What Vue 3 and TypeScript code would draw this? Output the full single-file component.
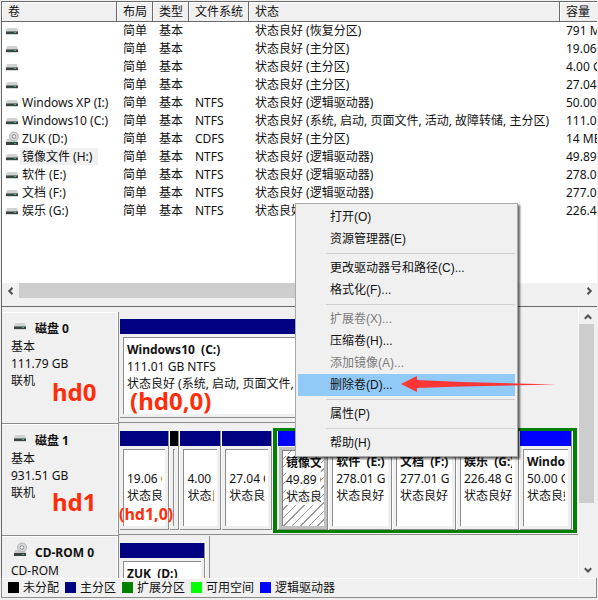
<script setup lang="ts">
interface Volume {
  name: string
  icon: 'drive' | 'disc'
  fs: string
  status: string
  size: string
  selected?: boolean
}

interface Partition {
  title: string
  size: string
  status: string
  kind: 'primary' | 'logical' | 'free'
  weight: number
  selected?: boolean
}

interface MenuEntry {
  label?: string
  disabled?: boolean
  active?: boolean
}

const columns = [
  { label: '卷', cls: 'c-name' },
  { label: '布局', cls: 'c-small' },
  { label: '类型', cls: 'c-small' },
  { label: '文件系统', cls: 'c-fs' },
  { label: '状态', cls: 'c-status' },
  { label: '容量', cls: 'c-size' },
]

const volumes: Volume[] = [
  { name: '', icon: 'drive', fs: '', status: '状态良好 (恢复分区)', size: '791 MB' },
  { name: '', icon: 'drive', fs: '', status: '状态良好 (主分区)', size: '19.06 GB' },
  { name: '', icon: 'drive', fs: '', status: '状态良好 (主分区)', size: '4.00 GB' },
  { name: '', icon: 'drive', fs: '', status: '状态良好 (主分区)', size: '27.04 GB' },
  { name: 'Windows XP (I:)', icon: 'drive', fs: 'NTFS', status: '状态良好 (逻辑驱动器)', size: '50.00 GB' },
  { name: 'Windows10 (C:)', icon: 'drive', fs: 'NTFS', status: '状态良好 (系统, 启动, 页面文件, 活动, 故障转储, 主分区)', size: '111.01 GB' },
  { name: 'ZUK (D:)', icon: 'disc', fs: 'CDFS', status: '状态良好 (主分区)', size: '14 MB' },
  { name: '镜像文件 (H:)', icon: 'drive', fs: 'NTFS', status: '状态良好 (逻辑驱动器)', size: '49.89 GB', selected: true },
  { name: '软件 (E:)', icon: 'drive', fs: 'NTFS', status: '状态良好 (逻辑驱动器)', size: '278.01 GB' },
  { name: '文档 (F:)', icon: 'drive', fs: 'NTFS', status: '状态良好 (逻辑驱动器)', size: '277.01 GB' },
  { name: '娱乐 (G:)', icon: 'drive', fs: 'NTFS', status: '状态良好 (逻辑驱动器)', size: '226.48 GB' },
]

const primaries: Partition[] = [
  { title: '', size: '19.06 GB', status: '状态良好', kind: 'primary', weight: 50 },
  { title: '', size: '', status: '', kind: 'free', weight: 10 },
  { title: '', size: '4.00 GB', status: '状态良好', kind: 'primary', weight: 42 },
  { title: '', size: '27.04 GB', status: '状态良好', kind: 'primary', weight: 51 },
]

const logicals: Partition[] = [
  { title: '镜像文件', size: '49.89 GB', status: '状态良好', kind: 'logical', weight: 51, selected: true },
  { title: '软件  (E:)', size: '278.01 GB', status: '状态良好', kind: 'logical', weight: 64 },
  { title: '文档  (F:)', size: '277.01 GB', status: '状态良好', kind: 'logical', weight: 64 },
  { title: '娱乐  (G:)', size: '226.48 GB', status: '状态良好', kind: 'logical', weight: 63 },
  { title: 'Windows XP', size: '50.00 GB', status: '状态良好', kind: 'logical', weight: 53 },
]

const disks = [
  {
    name: '磁盘 0', icon: 'drive', type: '基本', size: '111.79 GB', state: '联机', span: 'wide', extended: [] as Partition[],
    parts: [{ title: 'Windows10  (C:)', size: '111.01 GB NTFS', status: '状态良好 (系统, 启动, 页面文件, 活动, 故障转储, 主分区)', kind: 'primary', weight: 1 }] as Partition[],
  },
  { name: '磁盘 1', icon: 'drive', type: '基本', size: '931.51 GB', state: '联机', span: 'full', parts: primaries, extended: logicals },
  {
    name: 'CD-ROM 0', icon: 'disc', type: 'CD-ROM', size: '', state: '', span: 'short', extended: [] as Partition[],
    parts: [{ title: 'ZUK  (D:)', size: '', status: '', kind: 'primary', weight: 1 }] as Partition[],
  },
]

const menu: MenuEntry[] = [
  { label: '打开(O)' },
  { label: '资源管理器(E)' },
  {},
  { label: '更改驱动器号和路径(C)...' },
  { label: '格式化(F)...' },
  {},
  { label: '扩展卷(X)...', disabled: true },
  { label: '压缩卷(H)...' },
  { label: '添加镜像(A)...', disabled: true },
  { label: '删除卷(D)...', active: true },
  {},
  { label: '属性(P)' },
  {},
  { label: '帮助(H)' },
]

const legend = [
  { label: '未分配', cls: 'k-free' },
  { label: '主分区', cls: 'k-primary' },
  { label: '扩展分区', cls: 'k-extended' },
  { label: '可用空间', cls: 'k-space' },
  { label: '逻辑驱动器', cls: 'k-logical' },
]

const weightOf = (parts: Partition[]) => parts.reduce((sum, p) => sum + p.weight, 0)
</script>

<template>
  <svg class="defs" aria-hidden="true">
    <symbol id="drive" viewBox="0 0 14 16">
      <path d="M2 5h10l1 3H1z" fill="#d0d2d1" />
      <path d="M1 8h12v3H1z" fill="#3c4441" />
      <path d="M1 8h12v1H1z" fill="#7d8481" />
      <path d="M9 9h2v1H9z" fill="#38b060" />
      <path d="M1 11h12v1H1z" fill="#d3d6d4" />
    </symbol>
    <symbol id="disc" viewBox="0 0 14 16">
      <path d="M2 8h9l2 3H1z" fill="#c9cbca" />
      <path d="M1 11h12v3H1z" fill="#3c4441" />
      <path d="M9 12h2v1H9z" fill="#38b060" />
      <circle cx="9" cy="5.500" r="4.500" fill="#d7d9da" stroke="#a2a5a7" stroke-width=".8" />
      <circle cx="9" cy="5.500" r="1.800" fill="#fff" stroke="#85888a" />
    </symbol>
  </svg>

  <main class="window">
    <section class="list">
      <div class="table-wrap">
        <table>
          <thead>
            <tr>
              <th v-for="c in columns" :key="c.label" :class="c.cls">{{ c.label }}</th>
            </tr>
          </thead>
          <tbody>
            <tr v-for="(v, i) in volumes" :key="i">
              <td class="name">
                <div class="name-cell">
                  <svg class="icon"><use :href="'#' + v.icon" /></svg>
                  <span v-if="v.name" :class="{ picked: v.selected }">{{ v.name }}</span>
                </div>
              </td>
              <td>简单</td>
              <td>基本</td>
              <td>{{ v.fs }}</td>
              <td>{{ v.status }}</td>
              <td>{{ v.size }}</td>
            </tr>
          </tbody>
        </table>
      </div>
      <div class="hscroll">
        <button type="button" aria-label="向左滚动">
          <svg width="8" height="8" viewBox="0 0 8 8"><path d="M5.500 .8 2.300 4l3.200 3.200" /></svg>
        </button>
        <div class="hthumb"></div>
        <button type="button" aria-label="向右滚动">
          <svg width="8" height="8" viewBox="0 0 8 8"><path d="M2.500 .8 5.700 4 2.500 7.200" /></svg>
        </button>
      </div>
    </section>

    <section class="graph">
      <div class="disks">
        <article v-for="d in disks" :key="d.name" class="disk">
          <div class="label">
            <h2><svg class="icon"><use :href="'#' + d.icon" /></svg>{{ d.name }}</h2>
            <p>{{ d.type }}</p>
            <p>{{ d.size }}</p>
            <p>{{ d.state }}</p>
          </div>
          <div class="track" :class="d.span">
            <div class="parts" :style="{ flexGrow: weightOf(d.parts) }">
              <div v-for="(p, i) in d.parts" :key="i" class="part" :style="{ flexGrow: p.weight }">
                <div class="bar" :class="'k-' + p.kind"></div>
                <div class="body">
                  <div class="text"><b>{{ p.title }}</b><span>{{ p.size }}</span><span>{{ p.status }}</span></div>
                </div>
              </div>
            </div>
            <div v-if="d.extended.length" class="parts extended" :style="{ flexGrow: weightOf(d.extended) }">
              <div v-for="(p, i) in d.extended" :key="i" class="part" :class="{ hatched: p.selected }" :style="{ flexGrow: p.weight }">
                <div class="bar" :class="'k-' + p.kind"></div>
                <div class="body">
                  <div class="text"><b>{{ p.title }}</b><span>{{ p.size }}</span><span>{{ p.status }}</span></div>
                </div>
              </div>
            </div>
          </div>
        </article>
      </div>
      <div class="vscroll">
        <button type="button" aria-label="向上滚动">
          <svg width="8" height="8" viewBox="0 0 8 8"><path d="M.8 5.700 4 2.500l3.200 3.200" /></svg>
        </button>
        <div class="vtrack"><div class="vthumb"></div></div>
        <button type="button" aria-label="向下滚动">
          <svg width="8" height="8" viewBox="0 0 8 8"><path d="M.8 2.300 4 5.500l3.200-3.200" /></svg>
        </button>
      </div>
    </section>

    <footer class="legend">
      <span v-for="l in legend" :key="l.label" class="key"><i :class="l.cls"></i>{{ l.label }}</span>
    </footer>

    <strong class="note n1">hd0</strong>
    <strong class="note n2">(hd0,0)</strong>
    <strong class="note n3">hd1</strong>
    <strong class="note n4">(hd1,0)</strong>

    <div class="menu" role="menu">
      <template v-for="(m, i) in menu" :key="i">
        <button v-if="m.label" type="button" role="menuitem" :disabled="m.disabled" :class="{ active: m.active }">{{ m.label }}</button>
        <hr v-else />
      </template>
    </div>
    <svg class="arrow" width="156" height="18" viewBox="0 0 156 18" aria-hidden="true">
      <path d="M0 9 16 1v4L60 7l95 2.500L60 11.500l-44 1.500V17z" fill="#fb3634" />
    </svg>
  </main>
</template>

<style>
body {
  margin: 0;
  background: #f0f0f0;
}
</style>

<style scoped>
.window {
  position: relative;
  display: flex;
  flex-direction: column;
  box-sizing: border-box;
  height: 100vh;
  padding: 1px 1px 2px;
  overflow: hidden;
  background: #f0f0f0;
  color: #111;
  font: 12px/17px "Noto Sans", "Noto Sans CJK SC", sans-serif;
}
.defs {
  position: absolute;
  width: 0;
  height: 0;
}
.icon {
  flex: none;
  width: 14px;
  height: 16px;
}
.list {
  flex: 1;
  min-height: 0;
  display: flex;
  flex-direction: column;
  border: solid #696969;
  border-width: 1px 0 1px 1px;
  padding-bottom: 8px;
}
.table-wrap {
  flex: 1;
  min-height: 0;
  overflow: hidden;
  background: #fff;
}
table {
  width: 100%;
  table-layout: fixed;
  border-collapse: separate;
  border-spacing: 0;
}
th,
td {
  box-sizing: border-box;
  height: 18px;
  padding: 0 0 1px 6px;
  overflow: hidden;
  white-space: nowrap;
  text-align: left;
  font-weight: 400;
}
th {
  height: 20px;
  background: #f0f0f0;
  border-right: 1px solid #696969;
  border-bottom: 1px solid #696969;
  box-shadow: inset 1px 1px #fff;
}
th:last-child {
  border-right: 0;
}
.c-name {
  width: 115px;
}
.c-small {
  width: 36px;
}
.c-fs {
  width: 60px;
}
.c-status {
  width: 311px;
}
td.name {
  padding-left: 3px;
}
.name-cell {
  display: flex;
  align-items: center;
  gap: 1px;
}
.name-cell span {
  padding: 0 6px 0 2px;
}
.picked {
  background: #f0f0f0;
}
button {
  padding: 0;
  border: 0;
  background: transparent;
  color: inherit;
  font: inherit;
}
.hscroll,
.vscroll {
  flex: none;
  display: flex;
}
.hscroll {
  height: 15px;
}
.hscroll button,
.vscroll button {
  display: flex;
  align-items: center;
  justify-content: center;
  width: 17px;
  height: 15px;
}
.hscroll path,
.vscroll path {
  fill: none;
  stroke: #505050;
  stroke-width: 2;
}
.hthumb {
  flex: 0 1 480px;
  margin-right: auto;
  background: #cdcdcd;
}
.graph {
  flex: 0 0 271px;
  display: flex;
  min-height: 0;
  border-left: 1px solid #696969;
  padding-right: 1px;
}
.disks {
  flex: 1;
  min-width: 0;
  padding-top: 5px;
  overflow: hidden;
}
.disk {
  display: flex;
  height: 112px;
}
.label {
  flex: none;
  box-sizing: border-box;
  width: 117px;
  padding: 8px 0 0 9px;
  border: solid #8c8c8c;
  border-width: 0 1px 1px 0;
  box-shadow: inset -1px 1px #fff;
}
.label h2 {
  display: flex;
  gap: 8px;
  margin: 0;
  padding-left: 2px;
  font-size: 12px;
  line-height: 18px;
}
.label h2 .icon {
  margin-top: -2px;
}
.label p {
  height: 17px;
  margin: 0;
}
.track {
  box-sizing: border-box;
  display: flex;
  height: 111px;
  padding: 7px 1px 4px;
  border-bottom: 1px solid #8c8c8c;
}
.full {
  flex: 1;
  min-width: 0;
}
.wide {
  flex: 0 1 370px;
  min-width: 0;
}
.short {
  flex: 0 0 91px;
  padding-right: 3px;
  border-right: 1px solid #8c8c8c;
}
.parts {
  flex-basis: 0;
  min-width: 0;
  display: flex;
}
.extended {
  box-sizing: border-box;
  margin: -3px 0;
  border: solid #008000;
  border-width: 3px 4px;
  padding-left: 1px;
}
.part {
  box-sizing: border-box;
  flex-basis: 0;
  min-width: 0;
  display: flex;
  flex-direction: column;
  border-right: 1px solid #fff;
  box-shadow: inset -1px -1px #8c8c8c;
}
.bar {
  flex: none;
  height: 15px;
  margin-right: 1px;
}
.body {
  flex: 1;
  min-height: 0;
  display: flex;
  padding: 3px 4px 4px 3px;
}
.text {
  flex: 1;
  min-width: 0;
  padding: 3px 3px 0;
  border: solid #8c8c8c;
  border-width: 1px 0 0 1px;
  background: #fff;
}
.text b,
.text span {
  display: block;
  height: 17px;
  overflow: hidden;
  white-space: pre;
}
.k-free + .body .text {
  padding: 0;
  background: #f0f0f0;
}
.hatched .body {
  margin: 1px;
  padding: 3px;
  background: #c0c0c0;
}
.hatched .text {
  border-color: #808080;
  background: repeating-linear-gradient(135deg, #fff 0 5px, #9a9a9a 5px 6px);
}
.hatched .text b,
.hatched .text span {
  background: #fffc;
}
.k-free {
  background: #000;
}
.k-primary {
  background: #000080;
}
.k-extended {
  background: #008000;
}
.k-space {
  background: #00ff00;
}
.k-logical {
  background: #0000ff;
}
.vscroll {
  flex-direction: column;
  width: 17px;
  padding: 2px 0 1px;
  border-left: 1px solid #fff;
}
.vtrack {
  flex: 1;
}
.vthumb {
  height: 75%;
  margin-right: 2px;
  background: #cdcdcd;
}
.legend {
  flex: 0 0 20px;
  display: flex;
  align-items: center;
  gap: 6px;
  box-sizing: border-box;
  padding-left: 6px;
  border: solid #8c8c8c;
  border-width: 0 1px 1px 1px;
  box-shadow: inset 0 1px #fff;
  white-space: nowrap;
}
.key {
  display: flex;
  align-items: center;
  gap: 4px;
}
.key i {
  width: 11px;
  height: 11px;
}
.note {
  position: absolute;
  color: #ff2d0a;
  font-size: 24px;
  line-height: 28px;
}
.n1 {
  left: 52px;
  top: 378px;
}
.n2 {
  left: 130px;
  top: 387px;
}
.n3 {
  left: 52px;
  top: 488px;
}
.n4 {
  left: 119px;
  top: 500px;
  font-size: 16px;
}
.menu {
  position: absolute;
  left: 295px;
  top: 203px;
  box-sizing: border-box;
  width: 223px;
  padding: 2px;
  border: 1px solid #a8a8a8;
  background: #f0f0f0;
  box-shadow: 2px 2px 2px #0009;
  font-family: "Liberation Sans", "Noto Sans CJK SC", sans-serif;
}
.menu button {
  display: block;
  width: 100%;
  height: 22px;
  padding-left: 32px;
  text-align: left;
  white-space: nowrap;
}
.menu button:disabled {
  color: #7a7a7a;
}
.menu .active {
  background: #91c9f7;
}
.menu hr {
  height: 1px;
  margin: 3px 0 3px 28px;
  border: 0;
  background: #d0d0d0;
}
.arrow {
  position: absolute;
  left: 401px;
  top: 375px;
}
</style>
